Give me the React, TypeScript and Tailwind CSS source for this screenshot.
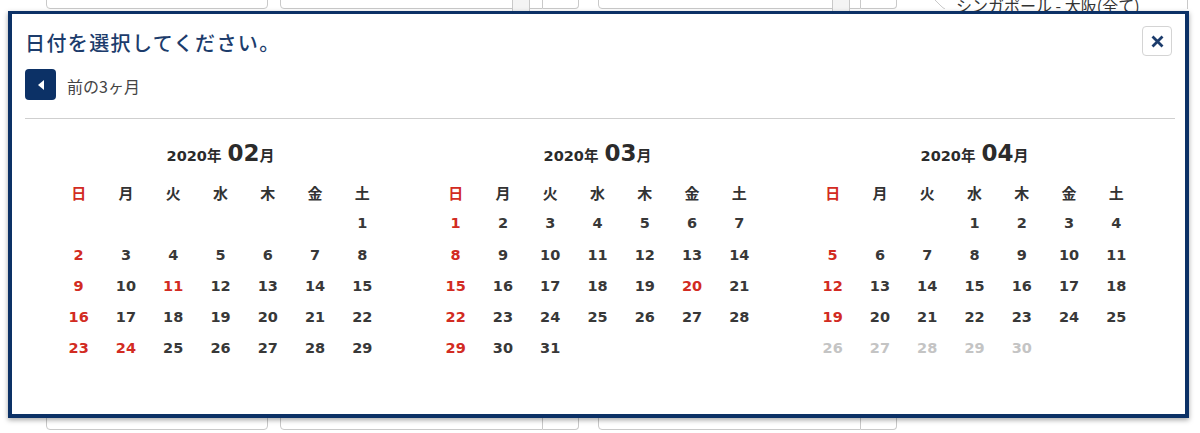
import React from 'react'

type Day = { n: number; tone?: 'red' | 'gray' }

const WEEK = ['日', '月', '火', '水', '木', '金', '土']

function buildMonth(offset: number, days: number, red: number[], grayFrom?: number): (Day | null)[] {
  const cells: (Day | null)[] = []
  for (let i = 0; i < offset; i++) cells.push(null)
  for (let d = 1; d <= days; d++) {
    const col = (offset + d - 1) % 7
    let tone: Day['tone']
    if (grayFrom && d >= grayFrom) tone = 'gray'
    else if (col === 0 || red.includes(d)) tone = 'red'
    cells.push({ n: d, tone })
  }
  return cells
}

const MONTHS = [
  { label: '02', cells: buildMonth(6, 29, [11, 24]) },
  { label: '03', cells: buildMonth(0, 31, [20]) },
  { label: '04', cells: buildMonth(3, 30, [], 26) },
]

const numFont = { fontFamily: "'DejaVu Sans', 'Noto Sans CJK JP', sans-serif" }

function Month({ label, cells }: { label: string; cells: (Day | null)[] }) {
  return (
    <div className="w-[377px] flex flex-col items-center">
      {/* month header */}
      <div className="h-[30px] flex items-baseline text-[#2b2b2b] font-bold" style={numFont}>
        <span className="text-[14.5px]">2020年</span>
        <span className="text-[23px] ml-[6px] leading-[30px]">{label}</span>
        <span className="text-[15px]">月</span>
      </div>

      <div className="w-[331px] mt-[9.5px] grid grid-cols-7 auto-rows-[31.2px]">
        {WEEK.map((w, i) => (
          <div
            key={w}
            className={`flex items-center justify-center text-[15px] font-semibold ${i === 0 ? 'text-[#d22b22]' : 'text-[#333]'}`}
            style={{ fontFamily: "'Noto Sans CJK JP', sans-serif" }}
          >
            {w}
          </div>
        ))}
        {cells.map((c, i) => (
          <div
            key={i}
            className={`flex items-center justify-center text-[14.5px] font-bold ${
              c?.tone === 'red' ? 'text-[#d22b22]' : c?.tone === 'gray' ? 'text-[#c4c4c4]' : 'text-[#383838]'
            }`}
            style={numFont}
          >
            {c ? c.n : ''}
          </div>
        ))}
      </div>
    </div>
  )
}

function FieldRow({ bottom }: { bottom?: boolean }) {
  const base = 'h-[35px] border border-[#c9c9c9] bg-white'
  return (
    <div className={`flex h-[35px] ${bottom ? 'mt-[386px]' : '-mt-[26px]'}`}>
      <div className={`${base} ml-[46px] w-[222px] rounded-[4px]`} />
      <div className="ml-[12px] flex">
        <div className={`${base} w-[263px] rounded-l-[4px] relative`}>
          {!bottom && <div className="absolute right-[12px] top-[20px] w-[18px] h-[18px] border border-[#c9c9c9] bg-[#f4f4f4]" />}
        </div>
        <div className={`${base} w-[36px] border-l-0 rounded-r-[4px]`} />
      </div>
      <div className="ml-[19px] flex">
        <div className={`${base} w-[263px] rounded-l-[4px] relative`}>
          {!bottom && <div className="absolute right-[10px] top-[20px] w-[18px] h-[18px] border border-[#c9c9c9] bg-[#f4f4f4]" />}
        </div>
        <div className={`${base} w-[36px] border-l-0 rounded-r-[4px]`} />
      </div>
      {!bottom && (
        <div className="flex items-end ml-[37px]">
          <svg width="12" height="35" viewBox="0 0 12 35" className="shrink-0">
            <path d="M1 26 L7 32 Q9 34 11 35" fill="none" stroke="#c9c9c9" strokeWidth="1" />
          </svg>
          <span
            className="ml-[10px] text-[16px] leading-[20px] mb-[-6px] text-[#333] whitespace-nowrap"
            style={{ fontFamily: "'Noto Sans CJK JP', sans-serif" }}
          >
            シンガポール - 大阪(全て)
          </span>
        </div>
      )}
      {!bottom && <div className="ml-auto mr-[12px] w-px h-[35px] bg-[#c9c9c9]" />}
    </div>
  )
}

export default function App() {
  return (
    <div className="relative w-[1200px] h-[433px] overflow-hidden bg-white">
      <FieldRow />
      <FieldRow bottom />

      {/* date picker dialog */}
      <div className="absolute left-[8px] top-[11px] w-[1181px] h-[407px] border-4 border-t-[3px] border-[#0c3166] bg-white shadow-[0_2px_5px_rgba(0,0,0,0.35)]">
        <div className="px-[13px]">
          <div className="pt-[12px] flex justify-between items-start">
            <h1
              className="mt-[2px] leading-[30px] text-[20px] tracking-[1.4px] font-medium text-[#1c3c6c]"
              style={{ fontFamily: "'Noto Sans CJK JP', sans-serif" }}
            >
              日付を選択してください。
            </h1>
            <button className="w-[30px] h-[30px] rounded-[4px] border border-[#d4d4d4] bg-white flex items-center justify-center">
              <svg width="13" height="13" viewBox="0 0 13 13">
                <path d="M1.5 1.5 L11.5 11.5 M11.5 1.5 L1.5 11.5" stroke="#1c3c6c" strokeWidth="2.8" />
              </svg>
            </button>
          </div>

          <div className="mt-[11px] flex items-center">
            <button className="w-[31px] h-[31px] rounded-[4px] bg-[#0c3166] flex items-center justify-center">
              <svg width="6" height="10" viewBox="0 0 6 10">
                <path d="M6 0 L0 5 L6 10 Z" fill="#fff" />
              </svg>
            </button>
            <span
              className="ml-[11px] mt-[3px] text-[16px] text-[#444]"
              style={{ fontFamily: "'Noto Sans CJK JP', sans-serif" }}
            >
              前の3ヶ月
            </span>
          </div>

          <div className="mt-[18px] h-px bg-[#cfcfcf] mr-[-3px]" />

          <div className="mt-[19px] ml-[7px] flex">
            {MONTHS.map((m) => (
              <Month key={m.label} label={m.label} cells={m.cells} />
            ))}
          </div>
        </div>
      </div>
    </div>
  )
}
